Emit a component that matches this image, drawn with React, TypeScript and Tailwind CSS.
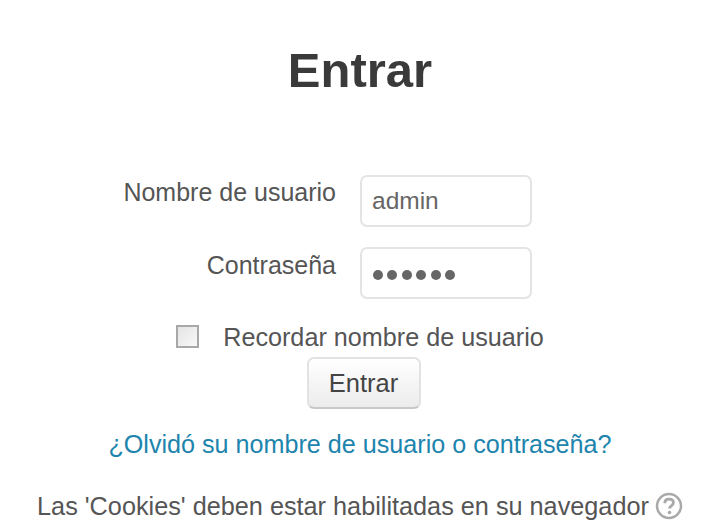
export default function App() {
  return (
    <div className="h-[530px] w-[702px] overflow-hidden bg-white pl-[18px] font-['Liberation_Sans',Arial,sans-serif] text-[#555]">
      <div className="flex flex-col items-center">
        <h1 className="mt-[40px] text-[49px] leading-[60px] font-bold text-[#3a3a3a]">Entrar</h1>
        <form className="mt-[75px] flex w-full flex-col items-center">
          <div className="flex w-full flex-col gap-5">
            <div className="flex items-start">
              <label className="mr-6 w-[318px] pt-[3px] text-right text-[25px] leading-[28px]">Nombre de usuario</label>
              <div className="flex h-[52px] w-[172px] items-center rounded-[7px] border-2 border-[#e4e4e4] pl-[10px] text-[24.5px] text-[#666]">admin</div>
            </div>
            <div className="flex items-start">
              <label className="mr-6 w-[318px] pt-1 text-right text-[25px] leading-[28px]">Contraseña</label>
              <div className="flex h-[52px] w-[172px] items-center gap-[4.4px] rounded-[7px] border-2 border-[#e4e4e4] pt-[3px] pl-[11px]">
                <span className="size-[10px] rounded-full bg-[#666]" />
                <span className="size-[10px] rounded-full bg-[#666]" />
                <span className="size-[10px] rounded-full bg-[#666]" />
                <span className="size-[10px] rounded-full bg-[#666]" />
                <span className="size-[10px] rounded-full bg-[#666]" />
                <span className="size-[10px] rounded-full bg-[#666]" />
              </div>
            </div>
          </div>
          <div className="mt-[24px] flex items-center gap-[24px]">
            <span className="-mt-[2px] size-[23px] border-2 border-[#a8a8a8] bg-gradient-to-br from-[#e4e4e4] to-[#f8f8f8]" />
            <span className="text-[25.2px] leading-[28px]">Recordar nombre de usuario</span>
          </div>
          <button type="button" className="mt-[6px] ml-[7px] h-[52px] w-[114px] rounded-[7px] border-2 border-[#e2e2e2] border-b-[#c8c8c8] bg-gradient-to-b from-white to-[#ececec] text-[25.5px] text-[#444]">
            Entrar
          </button>
          <a href="#" className="mt-[21px] text-[25.15px] leading-[28px] text-[#1d84ad]">¿Olvidó su nombre de usuario o contraseña?</a>
          <div className="mt-[34px] flex items-center gap-[6px] text-[25.25px] leading-[28px]">
            <span>Las 'Cookies' deben estar habilitadas en su navegador</span>
            <svg viewBox="0 0 28 28" className="size-[28px]">
              <circle cx="14" cy="14" r="12" fill="white" stroke="#a9a9a9" strokeWidth="2.5" />
              <path d="M9.8 11.2c0-2.7 1.9-4 4.3-4s4.3 1.3 4.3 3.6c0 3.1-3.9 3-3.9 5.8" fill="none" stroke="#a9a9a9" strokeWidth="2.8" />
              <circle cx="14.5" cy="20.5" r="1.8" fill="#a9a9a9" />
            </svg>
          </div>
        </form>
      </div>
    </div>
  );
}
